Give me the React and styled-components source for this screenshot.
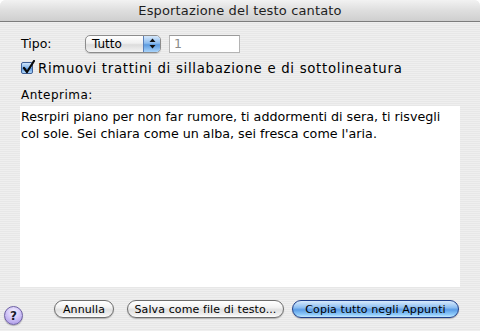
import React from "react";
import styled, { createGlobalStyle } from "styled-components";

const Global = createGlobalStyle`
  html, body { margin: 0; padding: 0; background: #ffffff; }
  body { font-family: "DejaVu Sans", "Liberation Sans", sans-serif; }
  * { box-sizing: border-box; }
`;

const Window = styled.div`
  width: 480px;
  height: 331px;
  display: flex;
  flex-direction: column;
  border-radius: 6px 6px 0 0;
  overflow: hidden;
  background: repeating-linear-gradient(to bottom, #efefef 0px, #efefef 1px, #e7e7e7 1px, #e7e7e7 2px);
  font-size: 13px;
  color: #000;
`;

const TitleBar = styled.div`
  height: 22px;
  flex: none;
  display: flex;
  align-items: center;
  justify-content: center;
  background: linear-gradient(to bottom, #f2f2f2 0%, #dedede 50%, #cfcfcf 100%);
  border-bottom: 1px solid #7c7c7c;
  color: #1e1e1e;
  font-size: 13px;
  letter-spacing: 0.15px;
  padding-bottom: 1px;
`;

const Content = styled.div`
  display: flex;
  flex-direction: column;
  padding: 12px 20px 0 20px;
`;

const Row = styled.div`
  display: flex;
  align-items: center;
  height: ${(p) => p.$h}px;
  margin-top: ${(p) => p.$mt || 0}px;
`;

const FieldLabel = styled.span`
  width: 65px;
  padding-left: 1px;
  font-size: 12.5px;
`;

const Select = styled.div`
  width: 76px;
  height: 18px;
  display: flex;
  border: 1px solid #8c8c8c;
  border-radius: 5px;
  overflow: hidden;
  background: linear-gradient(to bottom, #ffffff 0%, #f0f0f0 45%, #dcdcdc 55%, #f4f4f4 100%);
  box-shadow: 0 1px 1px rgba(0,0,0,0.15);
`;

const SelectText = styled.span`
  flex: 1;
  padding-left: 6px;
  line-height: 16px;
  font-size: 12px;
`;

const SelectArrows = styled.span`
  width: 17px;
  display: flex;
  align-items: center;
  justify-content: center;
  border-left: 1px solid #5a7fb8;
  background: linear-gradient(to bottom, #d6e8fb 0%, #8cbcef 45%, #5c9be0 55%, #a9d4fb 100%);
`;

const TextField = styled.div`
  width: 71px;
  height: 18px;
  margin-left: 8px;
  border: 1px solid #b4b4b4;
  border-top-color: #9a9a9a;
  background: #fff;
  color: #8a8a8a;
  padding-left: 4px;
  line-height: 16px;
  font-size: 12.5px;
`;

const CheckBox = styled.span`
  width: 12px;
  height: 12px;
  margin-left: 1px;
  flex: none;
  border: 1px solid #3f5f96;
  border-radius: 2px;
  background: linear-gradient(to bottom, #cfe4fa 0%, #7fb3ea 50%, #5a98de 55%, #b2d8fb 100%);
  position: relative;
`;

const CheckMark = styled.svg`
  position: absolute;
  left: 0px;
  top: -3px;
`;

const CheckLabel = styled.span`
  margin-left: 5px;
  font-size: 13.3px;
  letter-spacing: 0.7px;
  white-space: nowrap;
`;

const SmallLabel = styled.div`
  font-size: 12px;
  letter-spacing: 0.5px;
  line-height: 13px;
  margin-top: 14px;
  padding-left: 1px;
`;

const Preview = styled.div`
  margin-top: 4px;
  height: 181px;
  background: #fff;
  padding: 2px 0 0 1px;
  line-height: 17px;
  font-size: 12.7px;
  color: #000;
`;

const Footer = styled.div`
  display: flex;
  align-items: flex-start;
  padding: 13px 20px 0 4px;
`;

const HelpButton = styled.span`
  width: 19px;
  height: 19px;
  margin-top: 6px;
  border-radius: 50%;
  border: 1px solid #6c5fa3;
  background: radial-gradient(circle at 50% 30%, #f6f2ff 0%, #d2c6f7 45%, #a38fe4 100%);
  display: flex;
  align-items: center;
  justify-content: center;
  font-weight: bold;
  font-size: 12px;
  color: #1a1a2a;
  box-shadow: 0 1px 1px rgba(0,0,0,0.25);
`;

const Button = styled.span`
  height: 18px;
  width: ${(p) => p.$w}px;
  margin-left: ${(p) => p.$ml}px;
  border-radius: 9px;
  display: flex;
  align-items: center;
  justify-content: center;
  font-size: 11px;
  letter-spacing: 0.1px;
  white-space: nowrap;
  color: #000;
  border: 1px solid ${(p) => (p.$primary ? "#1f3f8a" : "#6e6e6e")};
  background: ${(p) =>
    p.$primary
      ? "linear-gradient(to bottom, #d8eafc 0%, #8fc0f2 40%, #5b9de6 55%, #8fcbfa 85%, #c4e8ff 100%)"
      : "linear-gradient(to bottom, #ffffff 0%, #f2f2f2 40%, #e0e0e0 55%, #efefef 85%, #ffffff 100%)"};
  box-shadow: 0 1px 1px rgba(0,0,0,0.25);
`;

export default function App() {
  return (
    <>
      <Global />
      <Window>
        <TitleBar>Esportazione del testo cantato</TitleBar>
        <Content>
          <Row $h={19}>
            <FieldLabel>Tipo:</FieldLabel>
            <Select>
              <SelectText>Tutto</SelectText>
              <SelectArrows>
                <svg width="7" height="11" viewBox="0 0 7 11">
                  <path d="M3.5 0.5 L6.5 4 L0.5 4 Z" fill="#111" />
                  <path d="M3.5 10.5 L6.5 7 L0.5 7 Z" fill="#111" />
                </svg>
              </SelectArrows>
            </Select>
            <TextField>1</TextField>
          </Row>
          <Row $h={14} $mt={8}>
            <CheckBox>
              <CheckMark width="13" height="14" viewBox="0 0 13 14">
                <path d="M2 8 L5 12 L12 1" fill="none" stroke="#0a0a0a" strokeWidth="2.2" strokeLinecap="round" strokeLinejoin="round" />
              </CheckMark>
            </CheckBox>
            <CheckLabel>Rimuovi trattini di sillabazione e di sottolineatura</CheckLabel>
          </Row>
          <SmallLabel>Anteprima:</SmallLabel>
          <Preview>
            Resrpiri piano per non far rumore, ti addormenti di sera, ti risvegli col sole. Sei chiara come un alba, sei fresca come l'aria.
          </Preview>
        </Content>
        <Footer>
          <HelpButton>?</HelpButton>
          <Button $w={60} $ml={31}>Annulla</Button>
          <Button $w={157} $ml={13}>Salva come file di testo...</Button>
          <Button $w={167} $ml={8} $primary>Copia tutto negli Appunti</Button>
        </Footer>
      </Window>
    </>
  );
}
